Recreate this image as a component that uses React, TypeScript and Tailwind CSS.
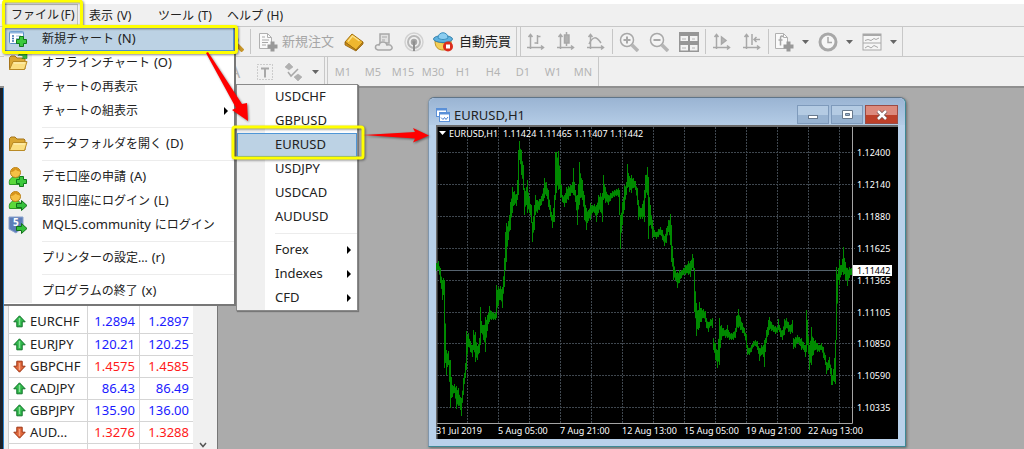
import type { ReactNode } from "react";

// x, high, low of the price bars, in chart pixels
const BARS: [number, number, number][] = [
  [437, 263, 271], [439, 261, 270], [441, 268, 283], [443, 280, 300], [444, 278, 295], [445, 280, 368],
  [447, 350, 375], [449, 351, 365], [451, 360, 408], [453, 385, 397], [455, 384, 393], [457, 386, 409],
  [459, 388, 406], [461, 397, 410], [462, 398, 416], [464, 378, 395], [466, 363, 378], [467, 331, 370],
  [469, 333, 347], [471, 341, 352], [473, 345, 357], [474, 330, 350], [476, 332, 362], [478, 346, 360],
  [480, 338, 353], [481, 307, 345], [482, 321, 333], [484, 325, 340], [486, 317, 352], [488, 315, 331],
  [490, 306, 322], [492, 311, 320], [494, 312, 320], [496, 313, 320], [497, 285, 318], [499, 287, 305],
  [501, 286, 300], [503, 287, 308], [505, 258, 287], [506, 232, 270], [507, 223, 262], [509, 221, 240],
  [511, 202, 230], [513, 187, 213], [515, 191, 205], [517, 194, 206], [518, 180, 200], [519, 150, 195],
  [520, 141, 160], [522, 150, 175], [524, 165, 190], [525, 188, 215], [527, 187, 205], [528, 180, 213],
  [530, 198, 213], [532, 205, 223], [533, 222, 242], [535, 205, 230], [536, 195, 215], [538, 200, 213],
  [540, 199, 210], [542, 196, 205], [544, 188, 201], [545, 178, 198], [547, 182, 196], [549, 190, 207],
  [551, 205, 217], [553, 215, 228], [555, 195, 222], [556, 152, 200], [557, 152, 193], [559, 151, 190],
  [561, 170, 198], [563, 195, 202], [565, 195, 207], [567, 187, 203], [569, 186, 200], [571, 185, 196],
  [573, 182, 193], [574, 168, 195], [576, 190, 202], [578, 195, 225], [580, 162, 205], [583, 180, 200],
  [585, 195, 220], [587, 208, 230], [589, 210, 221], [591, 203, 220], [593, 205, 213], [595, 204, 213],
  [597, 205, 222], [599, 195, 213], [601, 193, 212], [603, 193, 222], [604, 175, 200], [606, 187, 203],
  [609, 195, 205], [611, 193, 201], [613, 191, 198], [615, 190, 197], [617, 189, 196], [619, 188, 197],
  [620, 190, 215], [621, 215, 249], [623, 202, 225], [625, 185, 210], [627, 182, 195], [628, 164, 188],
  [630, 176, 192], [632, 175, 193], [634, 178, 188], [636, 181, 190], [638, 188, 205], [639, 200, 220],
  [641, 208, 219], [643, 204, 219], [645, 190, 222], [646, 175, 198], [648, 167, 195], [649, 177, 239],
  [651, 205, 225], [653, 220, 238], [655, 230, 237], [657, 232, 239], [659, 229, 237], [661, 227, 235],
  [663, 230, 240], [665, 236, 246], [667, 228, 243], [669, 220, 232], [671, 214, 245], [672, 225, 262],
  [674, 258, 280], [676, 270, 280], [678, 272, 288], [680, 270, 283], [682, 270, 278], [684, 268, 275],
  [686, 265, 275], [689, 261, 275], [691, 261, 277], [693, 254, 268], [694, 258, 270], [695, 268, 312],
  [697, 303, 336], [699, 310, 330], [700, 302, 328], [702, 308, 322], [704, 309, 318], [706, 311, 322],
  [707, 318, 328], [709, 322, 332], [711, 319, 326], [713, 318, 328], [714, 338, 350], [716, 343, 360],
  [718, 350, 368], [720, 318, 365], [722, 325, 340], [724, 328, 336], [726, 330, 338], [728, 325, 338],
  [730, 332, 340], [732, 333, 340], [734, 332, 340], [736, 328, 338], [737, 316, 332], [739, 309, 328],
  [741, 317, 330], [743, 323, 333], [745, 328, 336], [747, 334, 348], [748, 345, 355], [750, 348, 355],
  [752, 345, 352], [754, 341, 347], [756, 340, 346], [758, 341, 350], [760, 348, 361], [762, 345, 355],
  [764, 345, 357], [765, 340, 367], [767, 330, 343], [769, 320, 335], [770, 317, 330], [772, 322, 331],
  [774, 325, 332], [776, 326, 334], [778, 327, 333], [779, 319, 330], [781, 328, 337], [783, 330, 340],
  [785, 319, 335], [787, 318, 328], [789, 322, 332], [791, 325, 334], [793, 320, 333], [794, 338, 349],
  [796, 337, 348], [798, 335, 343], [800, 337, 345], [802, 338, 350], [804, 342, 350], [806, 345, 357],
  [807, 310, 352], [808, 320, 345], [810, 345, 370], [812, 327, 365], [814, 338, 355], [816, 340, 350],
  [818, 343, 352], [820, 345, 352], [822, 343, 350], [824, 347, 358], [826, 355, 365], [827, 362, 374],
  [829, 360, 370], [830, 357, 368], [832, 368, 385], [833, 375, 385], [835, 358, 382], [836, 340, 384],
  [837, 267, 340], [839, 268, 280], [840, 260, 285], [842, 265, 275], [844, 247, 275], [846, 262, 280],
  [848, 268, 286], [850, 267, 278], [852, 268, 275],
];

const PRICES: [string, number][] = [
  ["1.12400", 152], ["1.12140", 184], ["1.11880", 216], ["1.11625", 248], ["1.11365", 280],
  ["1.11105", 312], ["1.10850", 343], ["1.10590", 375], ["1.10335", 407],
];

const DATES: [string, number][] = [
  ["31 Jul 2019", 437], ["5 Aug 05:00", 499], ["7 Aug 21:00", 561], ["12 Aug 13:00", 623],
  ["15 Aug 05:00", 685], ["19 Aug 21:00", 747], ["22 Aug 13:00", 809],
];

const GRID_X = [468, 499, 530, 561, 592, 623, 654, 685, 716, 747, 778, 809, 840];

const QUOTES = [
  { symbol: "EURCHF", bid: "1.2894", ask: "1.2897", up: true },
  { symbol: "EURJPY", bid: "120.21", ask: "120.25", up: true },
  { symbol: "GBPCHF", bid: "1.4575", ask: "1.4585", up: false },
  { symbol: "CADJPY", bid: "86.43", ask: "86.49", up: true },
  { symbol: "GBPJPY", bid: "135.90", ask: "136.00", up: true },
  { symbol: "AUD...", bid: "1.3276", ask: "1.3288", up: false },
];

const PERIODS = ["M1", "M5", "M15", "M30", "H1", "H4", "D1", "W1", "MN"];

function barPath() {
  let d = "";
  BARS.forEach(([x, hi, lo], i) => {
    d += `M${x + 0.5} ${hi}V${lo}`;
    const next = BARS[i + 1];
    if (!next) return;
    // fill the columns between two listed bars with slightly shorter ones
    for (let k = x + 1; k < next[0]; k++) {
      const t = (k - x) / (next[0] - x);
      const a = hi + (next[1] - hi) * t;
      const b = lo + (next[2] - lo) * t;
      const cut = (b - a) * 0.15;
      d += `M${k + 0.5} ${a + cut}V${b - cut}`;
    }
  });
  return d;
}

function GreenPlus({ x, y }: { x: number; y: number }) {
  return (
    <path
      transform={`translate(${x} ${y})`}
      d="M3.5 0.5h4v3h3v4h-3v3h-4v-3h-3v-4h3z"
      fill="#3cc93c"
      stroke="#127a1b"
    />
  );
}

function GreenArrow({ x, y }: { x: number; y: number }) {
  return (
    <path
      transform={`translate(${x} ${y})`}
      d="M0.5 3.5h5v-3l5.5 5-5.5 5v-3h-5z"
      fill="#35c13b"
      stroke="#12701b"
    />
  );
}

function NewChartIcon() {
  return (
    <svg width="20" height="20" viewBox="0 0 20 20">
      <rect x="1.5" y="2.5" width="14" height="12" rx="1" fill="#fff" stroke="#5b8ec4" />
      <path d="M2 3.5h13" stroke="#8fb6df" strokeWidth="2" />
      <path d="M4 7h2M4 9.500h2M4 12h2" stroke="#3f72b0" strokeWidth="1.4" />
      <path d="M8 7h5M8 9.500h4M8 12h3" stroke="#9ab8d8" />
      <GreenPlus x={8} y={7} />
    </svg>
  );
}

function FolderIcon({ arrow }: { arrow?: boolean }) {
  return (
    <svg width="20" height="20" viewBox="0 0 20 20" className="overflow-visible">
      <path d="M1.500 16.500v-12l1.500-1.500h4l2 2h7l1 1v10z" fill="#d9a632" stroke="#a5741a" />
      <path d="M1.500 16.500l3.500-8h14l-2.500 8z" fill="#fbdf80" stroke="#b98a25" />
      <path d="M5.800 10h11" stroke="#fff3c0" />
      {arrow && (
        <path d="M10 2.500c2-3 6-3 7-1l2-1v5h-5l1.500-1.500c-1-1.500-3-2-5.500-1.500z" fill="#3ab93f" stroke="#1c7a24" strokeWidth="0.6" />
      )}
    </svg>
  );
}

function UserIcon({ badge }: { badge: "plus" | "arrow" }) {
  return (
    <svg width="20" height="20" viewBox="0 0 20 20">
      <path d="M1.500 17.500c-1-5 1.500-7.500 6-7.500s7 2.500 6 7.500z" fill="#5bd93b" stroke="#2b9a22" />
      <circle cx="7.500" cy="5.500" r="5" fill="#f6c146" stroke="#b77f17" />
      <path d="M3 5c0-5 8-6 9.500-0.500-2 0-4-1-5-2-1 1.500-2.500 2.500-4.500 2.500z" fill="#d6941c" />
      {badge === "plus" ? <GreenPlus x={8} y={9} /> : <GreenArrow x={8} y={9} />}
    </svg>
  );
}

function Mql5Icon() {
  return (
    <svg width="20" height="20" viewBox="0 0 20 20">
      <path d="M1 2h14v10l-7 6-7-4z" fill="#5d7db8" stroke="#8aa2cc" />
      <text x="5" y="11" fontSize="10" fontWeight="700" fill="#fff" fontFamily="Noto Sans, sans-serif">
        5
      </text>
      <GreenArrow x={8} y={8} />
    </svg>
  );
}

function QuoteArrow({ up }: { up: boolean }) {
  return (
    <svg width="13" height="13" viewBox="0 0 13 13" className={up ? "" : "rotate-180"}>
      <path
        d="M6.500 0.800l5.700 6h-3v5h-5.400v-5h-3z"
        fill={up ? "#2fb84a" : "#e0673a"}
        stroke={up ? "#12722a" : "#9c3312"}
        strokeLinejoin="round"
      />
      <path d="M6.500 3v7" stroke={up ? "#8be09a" : "#f6a684"} strokeWidth="1.500" />
    </svg>
  );
}

function Caret() {
  return (
    <svg width="7" height="4" viewBox="0 0 7 4">
      <path d="M0 0h7l-3.500 4z" fill="#666" />
    </svg>
  );
}

function Glyph({ children }: { children: ReactNode }) {
  return (
    <svg width="20" height="20" viewBox="0 0 20 20" fill="none" stroke="#a8a8a8" strokeWidth="1.500">
      {children}
    </svg>
  );
}

const axes = <path d="M4.500 17V3M2.500 5l2-2.500 2 2.500M1 15.500h16M15 13.500l2.500 2-2.500 2" />;

function Lens({ plus }: { plus?: boolean }) {
  return (
    <Glyph>
      <path d="M13 13l6 6" strokeWidth="3.500" stroke="#b5b5b5" />
      <circle cx="8" cy="8" r="6.500" fill="#f4f4f4" />
      <path d="M4.500 8h7" strokeWidth="2" />
      {plus && <path d="M8 4.500v7" strokeWidth="2" />}
    </Glyph>
  );
}

function PagePlus({ letter }: { letter?: boolean }) {
  return (
    <Glyph>
      <path d="M1.500 1.500h8l4 4v11h-12z" fill="#fafafa" stroke="#b0b0b0" strokeWidth="1" />
      <path d="M9.500 1.500v4h4" strokeWidth="1" stroke="#b0b0b0" />
      {letter ? (
        <path d="M9 4.500c-2-1-2.500 0-2.500 2v7M4.500 8h4" />
      ) : (
        <path d="M4 5h3M4 8h7M4 10.500h6M4 13h4" strokeWidth="1" />
      )}
      <path d="M14.500 9.500v10M9.500 14.500h10" strokeWidth="4" stroke="#999" />
    </Glyph>
  );
}

function Tool({ label, children }: { label: string; children: ReactNode }) {
  return (
    <button aria-label={label} className="flex w-[30px] items-center justify-center">
      {children}
    </button>
  );
}

function DropTool({ label, children }: { label: string; children: ReactNode }) {
  return (
    <button aria-label={label} className="flex w-11 items-center gap-2 pl-1">
      {children}
      <Caret />
    </button>
  );
}

function Divider() {
  return <div className="mx-px my-0.5 w-px self-stretch bg-[#c6c6c6]" />;
}

function Toolbar() {
  return (
    <div className="flex h-[30px] shrink-0 border-b border-[#c8c8c8]">
      <div className="flex border-r border-[#c8c8c8] pl-[219px]">
        <Tool label="Navigator">
          <svg width="20" height="20" viewBox="0 0 20 20">
            <circle cx="8" cy="8" r="6" fill="#e4eefa" stroke="#8a97a8" strokeWidth="1.500" />
            <path d="M12 12l7 7" stroke="#c8962b" strokeWidth="4" />
          </svg>
        </Tool>
        <Divider />
        <button className="flex w-[87px] items-center gap-1 pl-1.5 text-[13px] text-[#a6a6a6]">
          <PagePlus />
          新規注文
        </button>
        <Tool label="MetaEditor">
          <svg width="20" height="20" viewBox="0 0 20 20">
            <path d="M1 10l7-8 11 8-7 8z" fill="#efb72f" stroke="#a3700f" />
            <path d="M1 10v3l11 6 7-7v-2l-7 8z" fill="#c98c17" stroke="#94640f" strokeWidth="0.800" />
            <path d="M4 9.500l4.500-5.500 7 5" stroke="#fbe08a" strokeWidth="1.500" fill="none" />
          </svg>
        </Tool>
        <Tool label="Market">
          <Glyph>
            <path d="M6 2h9v9H6z" fill="#e2e2e2" />
            <path d="M8 5h5M8 8h3" strokeWidth="1" />
            <path d="M4 18c-4-1-3-6 1-5 1-4 7-4 8 0 5-1 7 4 3 5z" fill="#ececec" />
          </Glyph>
        </Tool>
        <Tool label="Signals">
          <Glyph>
            <circle cx="10" cy="10" r="9" stroke="#d2d2d2" />
            <circle cx="10" cy="10" r="6" stroke="#b8b8b8" strokeWidth="2" />
            <circle cx="10" cy="10" r="2.500" fill="#969696" />
            <path d="M10 10v9" stroke="#8f8f8f" strokeWidth="2" />
          </Glyph>
        </Tool>
        <button className="flex w-[87px] items-center gap-1.5 pl-1 text-[13px] text-[#222]">
          <svg width="20" height="20" viewBox="0 0 20 20">
            <path d="M2 9l8 2 8-2c1 6-3 9-8 9s-8-3-8-9z" fill="#f4cf58" stroke="#c0901c" />
            <ellipse cx="10" cy="7" rx="9.500" ry="3.500" fill="#5fb2df" stroke="#3380ac" />
            <path d="M5 6c0-7 10-7 10 0-3 2-7 2-10 0z" fill="#8bcdf0" stroke="#3c8fbd" />
            <circle cx="15" cy="14.500" r="5" fill="#dc2c1c" />
            <rect x="13" y="12.500" width="4" height="4" fill="#fff" />
          </svg>
          自動売買
        </button>
      </div>
      <div className="ml-[3px] flex border-x border-[#c8c8c8]">
        <Tool label="Bar chart">
          <Glyph>
            {axes}
            <path d="M11.500 3v9M11.500 4.500h3M8.500 11h3" />
          </Glyph>
        </Tool>
        <Tool label="Candlesticks">
          <Glyph>
            {axes}
            <path d="M10.500 0v14" />
            <rect x="8.500" y="3" width="4.500" height="8" fill="#b0b0b0" />
          </Glyph>
        </Tool>
        <Tool label="Line chart">
          <Glyph>
            {axes}
            <path d="M3 12c4-8 7-8 12-1" />
          </Glyph>
        </Tool>
        <Divider />
        <Tool label="Zoom in">
          <Lens plus />
        </Tool>
        <Tool label="Zoom out">
          <Lens />
        </Tool>
        <Tool label="Tile windows">
          <svg width="20" height="20" viewBox="0 0 20 20">
            <rect width="20" height="20" fill="#969696" />
            <path d="M1.500 4h7.500v5H1.500zM11 4h7.500v5H11zM1.500 13h7.500v5.500H1.500zM11 13h7.500v5.500H11z" fill="#f3f3f3" />
            <path d="M3 7h4M13 7h3M3 16h4M13 16h3" stroke="#b5b5b5" />
          </svg>
        </Tool>
        <Divider />
        <Tool label="Auto scroll">
          <Glyph>
            {axes}
            <path d="M9.500 5v7l4.500-3.500z" fill="#b5b5b5" />
          </Glyph>
        </Tool>
        <Tool label="Chart shift">
          <Glyph>
            {axes}
            <path d="M10 2v11M18 7.500h-6M14.500 5l-2.500 2.500 2.500 2.500" />
          </Glyph>
        </Tool>
        <Divider />
        <DropTool label="Indicators">
          <PagePlus letter />
        </DropTool>
        <DropTool label="Periods">
          <Glyph>
            <circle cx="10" cy="10" r="8" strokeWidth="3" fill="#f6f6f6" />
            <path d="M10 5v5.500h4" />
          </Glyph>
        </DropTool>
        <DropTool label="Templates">
          <Glyph>
            <rect x="1" y="2" width="18" height="16" fill="#f6f6f6" strokeWidth="1" />
            <path d="M1 3h18" strokeWidth="2" />
            <path d="M3 8.500l3-1 3 1 3-2 2 1 3-1.500M1 11h18M3 16l3-2 3 2 3-2.500 4 2" strokeWidth="1" />
          </Glyph>
        </DropTool>
      </div>
    </div>
  );
}

function PeriodBar() {
  return (
    <div className="flex h-[31px] shrink-0 border-b-2 border-[#8f8f8f]">
      <div className="flex border-r border-[#c8c8c8] pl-[220px] text-[#b4b4b4]">
        <button className="w-[30px] text-base">A</button>
        <Tool label="Text label">
          <Glyph>
            <rect x="2.500" y="2.500" width="15" height="15" strokeDasharray="1 2" strokeWidth="1" />
            <path d="M6 6.500h8M10 6.500v9" strokeWidth="2" />
          </Glyph>
        </Tool>
        <DropTool label="Arrows">
          <Glyph>
            <path d="M5 1l4 4-4 3-4-3zM14 12l4 3-4 4-4-4z" fill="#b0b0b0" strokeWidth="0.500" />
            <path d="M4 10l3 4 7-7" />
          </Glyph>
        </DropTool>
      </div>
      <div className="ml-0.5 flex border-x border-[#c8c8c8]">
        {PERIODS.map((p) => (
          <button key={p} className="w-[30px] pt-0.5 text-[11px] text-[#b4b4b4]">
            {p}
          </button>
        ))}
      </div>
    </div>
  );
}

type MenuItemProps = {
  jp?: string;
  en?: string;
  lead?: string;
  icon?: ReactNode;
  active?: boolean;
  more?: boolean;
};

function MenuItem({ jp, en, lead, icon, active, more }: MenuItemProps) {
  return (
    <button
      role="menuitem"
      className={`flex h-6 w-full items-center text-left text-[#222] ${
        active ? "bg-[#bcd2e4] outline -outline-offset-1 outline-[#4f96d6]" : ""
      }`}
    >
      <span className={`flex h-full w-7 shrink-0 items-center justify-center ${active ? "" : "bg-[#f0f0f0]"}`}>
        {icon}
      </span>
      <span className="flex flex-1 items-baseline gap-1 pl-2.5 whitespace-nowrap">
        {lead && <span className="text-[13px]">{lead}</span>}
        {jp && <span className="text-xs">{jp}</span>}
        {en && <span className="text-[13px]">{en}</span>}
      </span>
      {more && (
        <svg width="4" height="8" viewBox="0 0 4 8" className="mr-1.5">
          <path d="M0 0l4 4-4 4z" fill="#000" />
        </svg>
      )}
    </button>
  );
}

function MenuSeparator() {
  return (
    <div className="flex h-[9px] items-center">
      <div className="h-full w-7 bg-[#f0f0f0]" />
      <div className="ml-2.5 h-px flex-1 bg-[#ececec]" />
    </div>
  );
}

function FileMenu() {
  return (
    <div role="menu" className="absolute top-full left-0 z-20 w-[232px] border-t border-r-2 border-b-2 border-[#777] bg-white pb-px">
      <MenuItem jp="新規チャート" en="(N)" icon={<NewChartIcon />} active />
      <MenuItem jp="オフラインチャート" en="(O)" icon={<FolderIcon arrow />} />
      <MenuItem jp="チャートの再表示" />
      <MenuItem jp="チャートの組表示" more />
      <MenuSeparator />
      <MenuItem jp="データフォルダを開く" en="(D)" icon={<FolderIcon />} />
      <MenuSeparator />
      <MenuItem jp="デモ口座の申請" en="(A)" icon={<UserIcon badge="plus" />} />
      <MenuItem jp="取引口座にログイン" en="(L)" icon={<UserIcon badge="arrow" />} />
      <MenuItem lead="MQL5.community" jp="にログイン" icon={<Mql5Icon />} />
      <MenuSeparator />
      <MenuItem jp="プリンターの設定..." en="(r)" />
      <MenuSeparator />
      <MenuItem jp="プログラムの終了" en="(x)" />

      <div role="menu" className="absolute top-[57px] left-[232px] w-[122px] border border-[#8a8a8a] bg-white shadow-[1px_1px_1px_#777]">
        <MenuItem en="USDCHF" />
        <MenuItem en="GBPUSD" />
        <MenuItem en="EURUSD" active />
        <MenuItem en="USDJPY" />
        <MenuItem en="USDCAD" />
        <MenuItem en="AUDUSD" />
        <MenuSeparator />
        <MenuItem en="Forex" more />
        <MenuItem en="Indexes" more />
        <MenuItem en="CFD" more />
      </div>
    </div>
  );
}

function MenuBar() {
  const items = [
    ["表示", "(V)"],
    ["ツール", "(T)"],
    ["ヘルプ", "(H)"],
  ];
  return (
    <nav className="flex h-[23px] shrink-0 border-b border-[#c8c8c8] pl-1 text-xs text-[#222]">
      <div className="relative mr-px">
        <button className="flex h-full w-[74px] items-center gap-0.5 border border-[#bdbdbd] bg-[#e9e9e9] pl-1.5 whitespace-nowrap">
          ファイル <span>(F)</span>
        </button>
        <FileMenu />
      </div>
      {items.map(([jp, en]) => (
        <button key={jp} className="flex w-[69px] items-center gap-1 pl-2.5 pt-0.5 whitespace-nowrap">
          {jp} <span>{en}</span>
        </button>
      ))}
    </nav>
  );
}

function MarketWatch() {
  return (
    <aside className="flex w-[214px] shrink-0 border-r border-[#777] bg-[#f0f0f0] pt-[218px] pl-1">
      <table className="h-fit w-[185px] table-fixed border-collapse border-l border-[#cfcfcf] bg-white text-[13px] leading-none">
        <tbody>
          <tr className="h-[5px]">
            <td className="w-[79px] border-r border-[#d5d5d5]" />
            <td className="w-[52px] border-r border-[#d5d5d5]" />
            <td />
          </tr>
          {QUOTES.map((q) => (
            <tr key={q.symbol} className={`h-[22px] border-b border-[#d5d5d5] ${q.up ? "text-[#1a1aff]" : "text-[#ff1a1a]"}`}>
              <td className="border-r border-[#d5d5d5] pl-1 text-[#222]">
                <span className="flex items-center gap-1">
                  <QuoteArrow up={q.up} />
                  {q.symbol}
                </span>
              </td>
              <td className="border-r border-[#d5d5d5] pr-1 text-right">{q.bid}</td>
              <td className="pr-1 text-right">{q.ask}</td>
            </tr>
          ))}
          <tr className="h-[22px]">
            <td className="border-r border-[#d5d5d5]" />
            <td className="border-r border-[#d5d5d5]" />
            <td />
          </tr>
        </tbody>
      </table>
      <div className="flex w-[19px] items-end justify-center pb-px">
        <svg width="8" height="6" viewBox="0 0 8 6">
          <path d="M1 1l3 3.500 3-3.500" fill="none" stroke="#555" strokeWidth="1.500" />
        </svg>
      </div>
    </aside>
  );
}

function PriceChart() {
  return (
    <svg width="462" height="314" viewBox="437 125 462 314" className="block bg-black" fontFamily="Noto Sans, sans-serif" fontSize="9">
      <path d="M436 126h463M437.500 126v314" stroke="#6a6a6a" strokeWidth="2" fill="none" />
      <g stroke="#3f474f" strokeDasharray="2 1">
        {GRID_X.map((x) => (
          <path key={x} d={`M${x + 0.5} 127V423`} />
        ))}
        {PRICES.map(([label, y]) => (
          <path key={label} d={`M438 ${y + 0.5}H856`} />
        ))}
      </g>
      <path d="M438 270.500H853" stroke="#56636f" />
      <path d={barPath()} stroke="#008a00" />
      <path d="M853.500 127V423.500H438" stroke="#a5a5a5" fill="none" />
      <path d="M440 131h7l-3.500 4z" fill="#fff" />
      <g fill="#fff">
        <text x="450" y="137">EURUSD,H1</text>
        <text x="504" y="137">1.11424 1.11465 1.11407 1.11442</text>
        {PRICES.map(([label, y]) => (
          <text key={label} x="858" y={y + 4}>
            {label}
          </text>
        ))}
        {DATES.map(([label, x]) => (
          <text key={label} x={x} y="434">
            {label}
          </text>
        ))}
      </g>
      <rect x="854" y="265" width="39" height="11" fill="#fff" />
      <text x="858" y="274" fill="#000">1.11442</text>
    </svg>
  );
}

function ChartWindow() {
  return (
    <section className="absolute top-[9px] left-[210px] rounded-t-md border border-t-[#5f7488] border-r-[#3d8996] border-b-[#3d8996] border-l-[#7f95ab] bg-[#b9d1ea] px-[7px] pb-[7px] shadow-[1px_1px_3px_#666]">
      <header className="-mx-[7px] flex h-[27px] items-center gap-1 rounded-t-md bg-linear-to-b from-[#9ab4d3] to-[#b4cce6] px-[7px] pt-1.5 text-[#222]">
        <svg width="14" height="14" viewBox="0 0 14 14">
          <rect x="0.500" y="0.500" width="10" height="8" fill="#fff" stroke="#5a90d8" />
          <path d="M1 1.500h9" stroke="#5a90d8" strokeWidth="2" />
          <rect x="3.500" y="4.500" width="10" height="9" fill="#fff" stroke="#5a90d8" />
          <path d="M4 5.500h9" stroke="#5a90d8" strokeWidth="2" />
          <path d="M5 9.500l2 2 1.500-2 1.500 2 2-2.500" fill="none" stroke="#4a80d0" />
        </svg>
        <h2 className="flex-1 text-[13px] leading-5">EURUSD,H1</h2>
        <div className="flex gap-0.5">
          <button aria-label="Minimize" className="flex h-[19px] w-8 items-center justify-center border border-[#7e9abb] bg-linear-to-b from-[#b4cbe3] from-50% to-[#98b3d1] to-50%">
            <span className="mt-1 h-1 w-2.5 border border-[#67788c] bg-white" />
          </button>
          <button aria-label="Restore" className="flex h-[19px] w-8 items-center justify-center border border-[#7e9abb] bg-linear-to-b from-[#b4cbe3] from-50% to-[#98b3d1] to-50%">
            <svg width="11" height="9" viewBox="0 0 11 9">
              <path d="M0.500 0.500h10v8h-10z" fill="#fff" stroke="#67788c" />
              <path d="M3.500 3.500h4v2h-4z" fill="#9db6d2" stroke="#67788c" />
            </svg>
          </button>
          <button aria-label="Close" className="flex h-[19px] w-[33px] items-center justify-center border border-[#9b4b45] bg-linear-to-b from-[#dc8a7d] from-50% to-[#bd4029] to-50%">
            <svg width="12" height="10" viewBox="0 0 12 10">
              <path d="M2 1l8 8M10 1l-8 8" stroke="#6f4b49" strokeWidth="4" />
              <path d="M2 1l8 8M10 1l-8 8" stroke="#fff" strokeWidth="2.500" />
            </svg>
          </button>
        </div>
      </header>
      <PriceChart />
    </section>
  );
}

function Callouts() {
  return (
    <svg width="1024" height="449" className="pointer-events-none absolute top-0 left-0 z-30 drop-shadow-[1px_1px_1px_rgba(0,0,0,0.45)]">
      <g fill="none" stroke="#ffff00" strokeWidth="3">
        <rect x="3.500" y="1" width="78" height="25" rx="2" />
        <rect x="3.500" y="26.500" width="233" height="26" rx="2" />
        <rect x="233" y="127" width="130" height="31" rx="2" />
      </g>
      <g fill="#ff0000">
        <path d="M206 53l2-1 34 52 5-1 1 18-16-11 4-2z" />
        <path d="M363 135l52-3-2-4 16 7.500-16 7 2-4z" />
      </g>
    </svg>
  );
}

export default function App() {
  return (
    <div className="relative flex h-screen flex-col overflow-hidden bg-[#f0f0f0] pt-1 font-['Noto_Sans','Noto_Sans_CJK_JP',sans-serif]">
      <div className="absolute inset-x-0 top-0 h-1 bg-white" />
      <MenuBar />
      <Toolbar />
      <PeriodBar />
      <main className="flex min-h-0 flex-1 bg-[#ababab]">
        <div className="w-1 shrink-0 border-r border-[#2a83cf] bg-[#1d2129]" />
        <MarketWatch />
        <div className="relative flex-1 overflow-hidden">
          <ChartWindow />
        </div>
      </main>
      <Callouts />
    </div>
  );
}
